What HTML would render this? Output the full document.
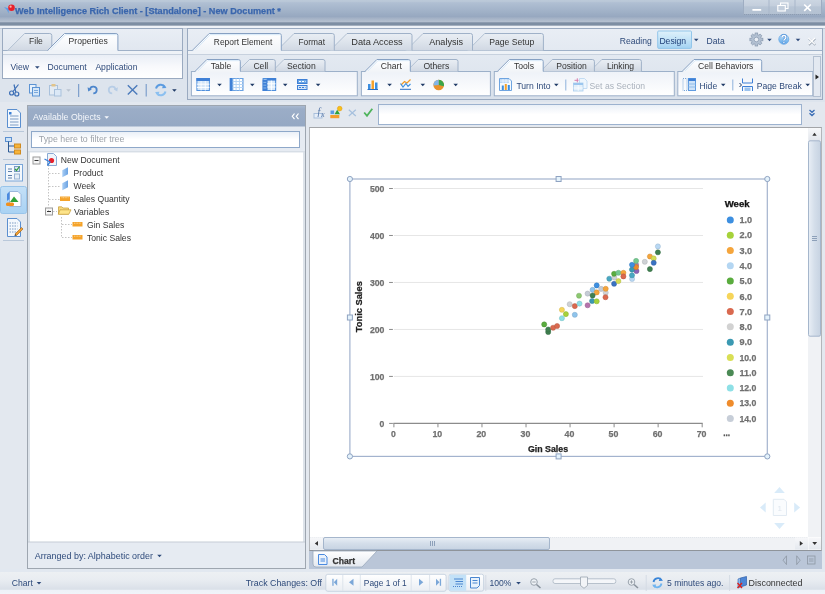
<!DOCTYPE html>
<html><head><meta charset="utf-8"><title>Web Intelligence Rich Client</title>
<style>
*{margin:0;padding:0;box-sizing:border-box}
html,body{width:825px;height:594px;overflow:hidden;background:#dde4ed;font-family:"Liberation Sans",sans-serif}
</style></head><body>
<svg width="825" height="594" viewBox="0 0 825 594" style="position:absolute;left:0;top:0;will-change:transform" font-family='"Liberation Sans", sans-serif'><defs>
<linearGradient id="gTitle" x1="0" y1="0" x2="0" y2="1">
 <stop offset="0" stop-color="#bccad9"/><stop offset="0.09" stop-color="#b8c6d7"/><stop offset="0.12" stop-color="#b0bfd3"/><stop offset="0.5" stop-color="#a1b2c8"/><stop offset="0.75" stop-color="#97a8c0"/><stop offset="0.86" stop-color="#a7b5c8"/><stop offset="1" stop-color="#b5c1d0"/>
</linearGradient>
<linearGradient id="gSel" x1="0" y1="0" x2="0" y2="1"><stop offset="0" stop-color="#ffffff"/><stop offset="1" stop-color="#f1f4f8"/></linearGradient>
<linearGradient id="gTab" x1="0" y1="0" x2="0" y2="1"><stop offset="0" stop-color="#e9eef4"/><stop offset="0.45" stop-color="#dfe5ed"/><stop offset="1" stop-color="#d0d8e3"/></linearGradient>
<linearGradient id="gStrip" x1="0" y1="0" x2="0" y2="1"><stop offset="0" stop-color="#e9eef5"/><stop offset="1" stop-color="#d6dee9"/></linearGradient>
<linearGradient id="gWhite" x1="0" y1="0" x2="0" y2="1"><stop offset="0" stop-color="#e9eef6"/><stop offset="0.5" stop-color="#f8f9fc"/><stop offset="1" stop-color="#ffffff"/></linearGradient>
<linearGradient id="gBox" x1="0" y1="0" x2="0" y2="1"><stop offset="0" stop-color="#eef2f8"/><stop offset="1" stop-color="#ffffff"/></linearGradient>
<linearGradient id="gSub" x1="0" y1="0" x2="0" y2="1"><stop offset="0" stop-color="#e4eaf2"/><stop offset="1" stop-color="#d9e1eb"/></linearGradient>
<linearGradient id="gHi" x1="0" y1="0" x2="0" y2="1"><stop offset="0" stop-color="#c4e0f7"/><stop offset="1" stop-color="#a9d2f3"/></linearGradient>
<linearGradient id="gHead" x1="0" y1="0" x2="0" y2="1"><stop offset="0" stop-color="#a9b9d0"/><stop offset="0.15" stop-color="#9badc7"/><stop offset="1" stop-color="#95a8c3"/></linearGradient>
<linearGradient id="gInput" x1="0" y1="0" x2="0" y2="1"><stop offset="0" stop-color="#e9eff7"/><stop offset="0.5" stop-color="#ffffff"/><stop offset="1" stop-color="#ffffff"/></linearGradient>
<linearGradient id="gSbBtn" x1="0" y1="0" x2="0" y2="1"><stop offset="0" stop-color="#f7f8fa"/><stop offset="1" stop-color="#e2e6ec"/></linearGradient>
<linearGradient id="gSbBtnH" x1="0" y1="0" x2="0" y2="1"><stop offset="0" stop-color="#f7f8fa"/><stop offset="1" stop-color="#e4e8ee"/></linearGradient>
<linearGradient id="gThumbV" x1="0" y1="0" x2="1" y2="0"><stop offset="0" stop-color="#e9eff6"/><stop offset="0.5" stop-color="#d4deea"/><stop offset="1" stop-color="#c7d3e2"/></linearGradient>
<linearGradient id="gThumbH" x1="0" y1="0" x2="0" y2="1"><stop offset="0" stop-color="#e9eff6"/><stop offset="0.5" stop-color="#d4deea"/><stop offset="1" stop-color="#c7d3e2"/></linearGradient>
<linearGradient id="gChartTab" x1="0" y1="0" x2="0" y2="1"><stop offset="0" stop-color="#ffffff"/><stop offset="1" stop-color="#e3e8ef"/></linearGradient>
<linearGradient id="gStatus" x1="0" y1="0" x2="0" y2="1"><stop offset="0" stop-color="#e2e8f0"/><stop offset="0.1" stop-color="#e2e8f0"/><stop offset="0.13" stop-color="#edf0f3"/><stop offset="0.45" stop-color="#e8ecf1"/><stop offset="0.78" stop-color="#dbe1e9"/><stop offset="0.84" stop-color="#e0e6ed"/><stop offset="0.86" stop-color="#eef2f8"/><stop offset="1" stop-color="#f0f4f9"/></linearGradient>
<linearGradient id="gNav" x1="0" y1="0" x2="0" y2="1"><stop offset="0" stop-color="#ffffff"/><stop offset="1" stop-color="#eaeef3"/></linearGradient>
<linearGradient id="gWin" x1="0" y1="0" x2="0" y2="1"><stop offset="0" stop-color="#cdd7e3"/><stop offset="0.45" stop-color="#c3cedc"/><stop offset="0.5" stop-color="#b8c5d5"/><stop offset="1" stop-color="#b3c1d2"/></linearGradient>
<linearGradient id="gHelp" x1="0" y1="0" x2="0" y2="1"><stop offset="0" stop-color="#d6ebfb"/><stop offset="0.5" stop-color="#8cc4f2"/><stop offset="1" stop-color="#5aa2e6"/></linearGradient>
<linearGradient id="gDesign" x1="0" y1="0" x2="0" y2="1"><stop offset="0" stop-color="#dff1fb"/><stop offset="0.5" stop-color="#c3e3f7"/><stop offset="1" stop-color="#a3d2f2"/></linearGradient>
<linearGradient id="gDim" x1="0" y1="0" x2="1" y2="0"><stop offset="0" stop-color="#a8cdf4"/><stop offset="1" stop-color="#6aa2e2"/></linearGradient>
</defs>
<rect x="0" y="0" width="825" height="22" fill="url(#gTitle)" />
<rect x="0" y="22" width="825" height="1" fill="#8d9cb0" />
<rect x="0" y="23" width="825" height="2" fill="#7d8ea3" />
<rect x="0" y="25" width="825" height="1" fill="#a3afbe" />
<rect x="0" y="26" width="825" height="78" fill="#dde4ed" />
<rect x="0" y="26" width="825" height="2" fill="#eef2f7" />
<rect x="0" y="28" width="825" height="1" fill="#c0cad8" />
<text x="15.1" y="14" font-size="9.2" fill="#3a66ad" font-weight="bold" text-anchor="start" stroke="#3a66ad" stroke-width="0.25" textLength="265.8" lengthAdjust="spacingAndGlyphs" >Web Intelligence Rich Client - [Standalone] - New Document *</text>
<path d="M4,7 L9,8.5 L8.5,13.5 L7,10 Z" fill="#5b9be8"/><circle cx="11.5" cy="7.8" r="3.3" fill="#e8202a"/><circle cx="10.6" cy="6.7" r="1.1" fill="#ffd6c8" opacity=".8"/>
<rect x="743.5" y="-1" width="78" height="15.5" fill="url(#gWin)" stroke="#9eadc2" stroke-width="1"/>
<line x1="769" y1="0" x2="769" y2="14" stroke="#a9b7ca" stroke-width="1" />
<line x1="795" y1="0" x2="795" y2="14" stroke="#a9b7ca" stroke-width="1" />
<line x1="744" y1="14.5" x2="821" y2="14.5" stroke="#8c9cb2" stroke-width="1" stroke-dasharray="1,1"/>
<rect x="752.4" y="9" width="8.8" height="1.8" fill="#ffffff" />
<rect x="780.5" y="3" width="7.5" height="5.5" fill="none" stroke="#fff" stroke-width="1.1"/><rect x="777.8" y="5.5" width="7.5" height="5.5" fill="#c3cedc" stroke="#fff" stroke-width="1.1"/>
<path d="M804.2,4.5 L810.8,10.8 M810.8,4.5 L804.2,10.8" stroke="#fff" stroke-width="1.6"/>
<rect x="2.5" y="28.5" width="180" height="50" fill="url(#gStrip)" stroke="#9aaac0" stroke-width="1" />
<rect x="3" y="50.5" width="179" height="4" fill="#eef2f7" />
<line x1="3" y1="54.5" x2="182" y2="54.5" stroke="#c7d1de" stroke-width="1" />
<rect x="3" y="55" width="179" height="23" fill="url(#gWhite)" />
<line x1="3" y1="50.5" x2="182" y2="50.5" stroke="#9fb1c8" stroke-width="1" />
<path d="M7.600000000000001,50.5 L24.6,33.5 L49.8,33.5 Q51.8,33.5 51.8,35.5 L51.8,50.5 Z" fill="url(#gTab)" stroke="none"/>
<path d="M7.600000000000001,50.5 L24.6,33.5" fill="none" stroke="#b4c2d3" stroke-width="1"/>
<path d="M24.6,33.5 L49.8,33.5 Q51.8,33.5 51.8,35.5 L51.8,50.5" fill="none" stroke="#9fb1c8" stroke-width="1"/>
<text x="29" y="44.4" font-size="8.6" fill="#333" font-weight="normal" text-anchor="start" >File</text>
<path d="M47.5,50.5 L64.5,33.5 L115.9,33.5 Q117.9,33.5 117.9,35.5 L117.9,50.5 Z" fill="url(#gSel)" stroke="none"/>
<path d="M47.5,50.5 L64.5,33.5 L115.9,33.5 Q117.9,33.5 117.9,35.5 L117.9,50.5" fill="none" stroke="#86a0c2" stroke-width="1"/>
<path d="M50.0,50.5 L65.5,34.7 L116.9,34.7" fill="none" stroke="#d6e8f8" stroke-width="1"/>
<rect x="48.7" y="49.9" width="68.7" height="1.6" fill="#eef2f7"/>
<text x="68.6" y="44.4" font-size="8.6" fill="#333" font-weight="normal" text-anchor="start" >Properties</text>
<text x="10.4" y="70" font-size="8.6" fill="#2e4a7a" font-weight="normal" text-anchor="start" >View</text>
<text x="47.6" y="70" font-size="8.6" fill="#2e4a7a" font-weight="normal" text-anchor="start" >Document</text>
<text x="95.4" y="70" font-size="8.6" fill="#2e4a7a" font-weight="normal" text-anchor="start" >Application</text>
<rect x="187.5" y="28.5" width="635" height="71" fill="url(#gStrip)" stroke="#9aaac0" stroke-width="1" />
<rect x="188" y="50.5" width="634" height="48.5" fill="url(#gSub)" />
<line x1="188" y1="50.5" x2="822" y2="50.5" stroke="#9fb1c8" stroke-width="1" />
<rect x="188" y="51" width="634" height="3" fill="#eef2f7" />
<line x1="188" y1="54.5" x2="822" y2="54.5" stroke="#c7d1de" stroke-width="1" />
<path d="M467.7,50.5 L484.7,33.5 L541.4,33.5 Q543.4,33.5 543.4,35.5 L543.4,50.5 Z" fill="url(#gTab)" stroke="none"/>
<path d="M467.7,50.5 L484.7,33.5" fill="none" stroke="#b4c2d3" stroke-width="1"/>
<path d="M484.7,33.5 L541.4,33.5 Q543.4,33.5 543.4,35.5 L543.4,50.5" fill="none" stroke="#9fb1c8" stroke-width="1"/>
<text x="489.3" y="44.7" font-size="8.6" fill="#333" font-weight="normal" text-anchor="start" >Page Setup</text>
<path d="M406.0,50.5 L423,33.5 L470.5,33.5 Q472.5,33.5 472.5,35.5 L472.5,50.5 Z" fill="url(#gTab)" stroke="none"/>
<path d="M406.0,50.5 L423,33.5" fill="none" stroke="#b4c2d3" stroke-width="1"/>
<path d="M423,33.5 L470.5,33.5 Q472.5,33.5 472.5,35.5 L472.5,50.5" fill="none" stroke="#9fb1c8" stroke-width="1"/>
<text x="429.2" y="44.7" font-size="8.6" fill="#333" font-weight="normal" text-anchor="start" textLength="33.9" lengthAdjust="spacingAndGlyphs" >Analysis</text>
<path d="M330.0,50.5 L347,33.5 L410,33.5 Q412,33.5 412,35.5 L412,50.5 Z" fill="url(#gTab)" stroke="none"/>
<path d="M330.0,50.5 L347,33.5" fill="none" stroke="#b4c2d3" stroke-width="1"/>
<path d="M347,33.5 L410,33.5 Q412,33.5 412,35.5 L412,50.5" fill="none" stroke="#9fb1c8" stroke-width="1"/>
<text x="351.3" y="44.7" font-size="8.6" fill="#333" font-weight="normal" text-anchor="start" textLength="51.4" lengthAdjust="spacingAndGlyphs" >Data Access</text>
<path d="M277.0,50.5 L294,33.5 L332.3,33.5 Q334.3,33.5 334.3,35.5 L334.3,50.5 Z" fill="url(#gTab)" stroke="none"/>
<path d="M277.0,50.5 L294,33.5" fill="none" stroke="#b4c2d3" stroke-width="1"/>
<path d="M294,33.5 L332.3,33.5 Q334.3,33.5 334.3,35.5 L334.3,50.5" fill="none" stroke="#9fb1c8" stroke-width="1"/>
<text x="298.5" y="44.7" font-size="8.6" fill="#333" font-weight="normal" text-anchor="start" textLength="26.5" lengthAdjust="spacingAndGlyphs" >Format</text>
<path d="M192.2,50.5 L209.2,33.5 L279.3,33.5 Q281.3,33.5 281.3,35.5 L281.3,50.5 Z" fill="url(#gSel)" stroke="none"/>
<path d="M192.2,50.5 L209.2,33.5 L279.3,33.5 Q281.3,33.5 281.3,35.5 L281.3,50.5" fill="none" stroke="#86a0c2" stroke-width="1"/>
<path d="M194.7,50.5 L210.2,34.7 L280.3,34.7" fill="none" stroke="#d6e8f8" stroke-width="1"/>
<rect x="193.39999999999998" y="49.9" width="87.40000000000002" height="1.6" fill="#eef2f7"/>
<text x="213.8" y="44.7" font-size="8.6" fill="#333" font-weight="normal" text-anchor="start" textLength="58.5" lengthAdjust="spacingAndGlyphs" >Report Element</text>
<rect x="191.4" y="71.5" width="165.9" height="24.3" fill="url(#gBox)" stroke="#9cb0c9" stroke-width="1" />
<path d="M272.0,71.5 L284,59.5 L323,59.5 Q325,59.5 325,61.5 L325,71.5 Z" fill="url(#gTab)" stroke="none"/>
<path d="M272.0,71.5 L284,59.5" fill="none" stroke="#b4c2d3" stroke-width="1"/>
<path d="M284,59.5 L323,59.5 Q325,59.5 325,61.5 L325,71.5" fill="none" stroke="#9fb1c8" stroke-width="1"/>
<text x="287" y="69.2" font-size="8.6" fill="#333" font-weight="normal" text-anchor="start" >Section</text>
<path d="M237.5,71.5 L249.5,59.5 L273.3,59.5 Q275.3,59.5 275.3,61.5 L275.3,71.5 Z" fill="url(#gTab)" stroke="none"/>
<path d="M237.5,71.5 L249.5,59.5" fill="none" stroke="#b4c2d3" stroke-width="1"/>
<path d="M249.5,59.5 L273.3,59.5 Q275.3,59.5 275.3,61.5 L275.3,71.5" fill="none" stroke="#9fb1c8" stroke-width="1"/>
<text x="253.4" y="69.2" font-size="8.6" fill="#333" font-weight="normal" text-anchor="start" >Cell</text>
<path d="M194.9,71.5 L206.9,59.5 L238.3,59.5 Q240.3,59.5 240.3,61.5 L240.3,71.5 Z" fill="url(#gSel)" stroke="none"/>
<path d="M194.9,71.5 L206.9,59.5 L238.3,59.5 Q240.3,59.5 240.3,61.5 L240.3,71.5" fill="none" stroke="#86a0c2" stroke-width="1"/>
<path d="M197.4,71.5 L207.9,60.7 L239.3,60.7" fill="none" stroke="#d6e8f8" stroke-width="1"/>
<rect x="196.1" y="70.9" width="43.7" height="1.6" fill="#f1f4f8"/>
<text x="210.8" y="69.2" font-size="8.6" fill="#333" font-weight="normal" text-anchor="start" >Table</text>
<rect x="361.4" y="71.5" width="129.0" height="24.3" fill="url(#gBox)" stroke="#9cb0c9" stroke-width="1" />
<path d="M406.3,71.5 L418.3,59.5 L456,59.5 Q458,59.5 458,61.5 L458,71.5 Z" fill="url(#gTab)" stroke="none"/>
<path d="M406.3,71.5 L418.3,59.5" fill="none" stroke="#b4c2d3" stroke-width="1"/>
<path d="M418.3,59.5 L456,59.5 Q458,59.5 458,61.5 L458,71.5" fill="none" stroke="#9fb1c8" stroke-width="1"/>
<text x="423.4" y="69.2" font-size="8.6" fill="#333" font-weight="normal" text-anchor="start" >Others</text>
<path d="M364.9,71.5 L376.9,59.5 L408.3,59.5 Q410.3,59.5 410.3,61.5 L410.3,71.5 Z" fill="url(#gSel)" stroke="none"/>
<path d="M364.9,71.5 L376.9,59.5 L408.3,59.5 Q410.3,59.5 410.3,61.5 L410.3,71.5" fill="none" stroke="#86a0c2" stroke-width="1"/>
<path d="M367.4,71.5 L377.9,60.7 L409.3,60.7" fill="none" stroke="#d6e8f8" stroke-width="1"/>
<rect x="366.09999999999997" y="70.9" width="43.70000000000003" height="1.6" fill="#f1f4f8"/>
<text x="380.8" y="69.2" font-size="8.6" fill="#333" font-weight="normal" text-anchor="start" >Chart</text>
<rect x="494.3" y="71.5" width="179.99999999999994" height="24.3" fill="url(#gBox)" stroke="#9cb0c9" stroke-width="1" />
<path d="M589.8,71.5 L601.8,59.5 L639.4,59.5 Q641.4,59.5 641.4,61.5 L641.4,71.5 Z" fill="url(#gTab)" stroke="none"/>
<path d="M589.8,71.5 L601.8,59.5" fill="none" stroke="#b4c2d3" stroke-width="1"/>
<path d="M601.8,59.5 L639.4,59.5 Q641.4,59.5 641.4,61.5 L641.4,71.5" fill="none" stroke="#9fb1c8" stroke-width="1"/>
<text x="606.9" y="69.2" font-size="8.6" fill="#333" font-weight="normal" text-anchor="start" >Linking</text>
<path d="M540.3,71.5 L552.3,59.5 L592.4,59.5 Q594.4,59.5 594.4,61.5 L594.4,71.5 Z" fill="url(#gTab)" stroke="none"/>
<path d="M540.3,71.5 L552.3,59.5" fill="none" stroke="#b4c2d3" stroke-width="1"/>
<path d="M552.3,59.5 L592.4,59.5 Q594.4,59.5 594.4,61.5 L594.4,71.5" fill="none" stroke="#9fb1c8" stroke-width="1"/>
<text x="556.2" y="69.2" font-size="8.6" fill="#333" font-weight="normal" text-anchor="start" >Position</text>
<path d="M497.3,71.5 L509.3,59.5 L541.2,59.5 Q543.2,59.5 543.2,61.5 L543.2,71.5 Z" fill="url(#gSel)" stroke="none"/>
<path d="M497.3,71.5 L509.3,59.5 L541.2,59.5 Q543.2,59.5 543.2,61.5 L543.2,71.5" fill="none" stroke="#86a0c2" stroke-width="1"/>
<path d="M499.8,71.5 L510.3,60.7 L542.2,60.7" fill="none" stroke="#d6e8f8" stroke-width="1"/>
<rect x="498.5" y="70.9" width="44.20000000000003" height="1.6" fill="#f1f4f8"/>
<text x="514" y="69.2" font-size="8.6" fill="#333" font-weight="normal" text-anchor="start" >Tools</text>
<rect x="677.8" y="71.5" width="135.0" height="24.3" fill="url(#gBox)" stroke="#9cb0c9" stroke-width="1" />
<path d="M682.0,71.5 L694,59.5 L759.7,59.5 Q761.7,59.5 761.7,61.5 L761.7,71.5 Z" fill="url(#gSel)" stroke="none"/>
<path d="M682.0,71.5 L694,59.5 L759.7,59.5 Q761.7,59.5 761.7,61.5 L761.7,71.5" fill="none" stroke="#86a0c2" stroke-width="1"/>
<path d="M684.5,71.5 L695,60.7 L760.7,60.7" fill="none" stroke="#d6e8f8" stroke-width="1"/>
<rect x="683.2" y="70.9" width="78.00000000000004" height="1.6" fill="#f1f4f8"/>
<text x="698" y="69.2" font-size="8.6" fill="#333" font-weight="normal" text-anchor="start" >Cell Behaviors</text>
<rect x="813.5" y="56.5" width="7" height="40" fill="#e3e9f1" stroke="#b3c0d1" stroke-width="1" />
<path d="M815.5,74.5 L819,77 L815.5,79.5 Z" fill="#222"/>
<text x="619.8" y="43.6" font-size="8.6" fill="#2e4a7a" font-weight="normal" text-anchor="start" >Reading</text>
<rect x="657.7" y="31" width="33.8" height="17.4" fill="url(#gDesign)" stroke="#93c6ea" stroke-width="1" rx="1"/>
<text x="659.4" y="43.6" font-size="8.6" fill="#1f3f78" font-weight="normal" text-anchor="start" >Design</text>
<text x="706.6" y="43.6" font-size="8.6" fill="#2e4a7a" font-weight="normal" text-anchor="start" >Data</text>
<rect x="196.9" y="78.5" width="12.5" height="12" fill="#d4e6f8" stroke="#4f8fdc" stroke-width="1"/>
<rect x="196.4" y="78" width="13.5" height="3" fill="#3f80d6" />
<line x1="201.1" y1="81" x2="201.1" y2="90.5" stroke="#f4f9fe" stroke-width="1" />
<line x1="205.3" y1="81" x2="205.3" y2="90.5" stroke="#f4f9fe" stroke-width="1" />
<line x1="196.9" y1="84.2" x2="209.4" y2="84.2" stroke="#ffffff" stroke-width="1" />
<line x1="196.9" y1="87.4" x2="209.4" y2="87.4" stroke="#ffffff" stroke-width="1" />
<path d="M217.2,83.8 L221.8,83.8 L219.5,86.3 Z" fill="#1f3a66"/>
<rect x="230.3" y="78.5" width="12.5" height="12" fill="#d4e6f8" stroke="#4f8fdc" stroke-width="1"/>
<rect x="229.8" y="78" width="3" height="13" fill="#3f80d6" />
<rect x="232.8" y="78.5" width="10" height="12" fill="#ffffff" stroke="#6aa2e2"/>
<line x1="236.10000000000002" y1="78.5" x2="236.10000000000002" y2="90.5" stroke="#b5d4f4" stroke-width="1" />
<line x1="239.4" y1="78.5" x2="239.4" y2="90.5" stroke="#b5d4f4" stroke-width="1" />
<line x1="232.8" y1="81.5" x2="242.8" y2="81.5" stroke="#b5d4f4" stroke-width="1" />
<line x1="232.8" y1="84.5" x2="242.8" y2="84.5" stroke="#b5d4f4" stroke-width="1" />
<line x1="232.8" y1="87.5" x2="242.8" y2="87.5" stroke="#b5d4f4" stroke-width="1" />
<path d="M250.0,83.8 L254.60000000000002,83.8 L252.3,86.3 Z" fill="#1f3a66"/>
<rect x="263.1" y="78.5" width="12.5" height="12" fill="#d4e6f8" stroke="#4f8fdc" stroke-width="1"/>
<rect x="267.1" y="78.5" width="8.5" height="12" fill="#d8e9fa" stroke="#4f8fdc"/>
<rect x="267.1" y="78" width="9" height="2.6" fill="#3f80d6" />
<line x1="267.1" y1="83.8" x2="275.6" y2="83.8" stroke="#ffffff" stroke-width="1" />
<line x1="267.1" y1="87.0" x2="275.6" y2="87.0" stroke="#ffffff" stroke-width="1" />
<line x1="271.35" y1="80.6" x2="271.35" y2="90.5" stroke="#ffffff" stroke-width="1" />
<rect x="262.6" y="79.6" width="4.5" height="11.4" fill="#3f80d6" />
<line x1="263.40000000000003" y1="82.39999999999999" x2="266.3" y2="82.39999999999999" stroke="#9cc6f0" stroke-width="0.8" />
<line x1="263.40000000000003" y1="85.19999999999999" x2="266.3" y2="85.19999999999999" stroke="#9cc6f0" stroke-width="0.8" />
<line x1="263.40000000000003" y1="88.0" x2="266.3" y2="88.0" stroke="#9cc6f0" stroke-width="0.8" />
<path d="M282.9,83.8 L287.5,83.8 L285.2,86.3 Z" fill="#1f3a66"/>
<rect x="297.5" y="79.5" width="9.5" height="4" fill="#6aa6e6" stroke="#3f80d6"/><rect x="297.5" y="85.5" width="9.5" height="4" fill="#d4e6f8" stroke="#3f80d6"/>
<line x1="299" y1="81.5" x2="305.5" y2="81.5" stroke="#ffffff" stroke-width="1" stroke-dasharray="2,1"/>
<line x1="299" y1="87.5" x2="305.5" y2="87.5" stroke="#3f80d6" stroke-width="1" stroke-dasharray="2,1"/>
<path d="M315.8,83.8 L320.40000000000003,83.8 L318.1,86.3 Z" fill="#1f3a66"/>
<rect x="368" y="84" width="2.5" height="5.5" fill="#3b8ee0"/><rect x="371.5" y="80.5" width="2.5" height="9" fill="#f5a22b"/><rect x="375" y="82.5" width="2.5" height="7" fill="#3b8ee0"/><line x1="367.5" y1="89.5" x2="378" y2="89.5" stroke="#2b6fc4"/>
<path d="M387.3,83.8 L391.90000000000003,83.8 L389.6,86.3 Z" fill="#1f3a66"/>
<path d="M401,85 L404.5,81.5 L407,83 L410.5,79.5" fill="none" stroke="#f29b27" stroke-width="1.2"/><path d="M400.5,83.5 L403,87 L406,83.5 L408,86.5 L410.5,84" fill="none" stroke="#3b8ee0" stroke-width="1.1"/><line x1="400" y1="89.3" x2="411" y2="89.3" stroke="#2b6fc4"/>
<path d="M420.5,83.8 L425.1,83.8 L422.8,86.3 Z" fill="#1f3a66"/>
<circle cx="438.7" cy="85" r="5.3" fill="#e8912c"/><path d="M438.7,85 L438.7,79.7 A5.3,5.3 0 0 1 443.9,86.2 Z" fill="#3aa64a"/><path d="M438.7,85 L433.5,85.6 A5.3,5.3 0 0 1 438.7,79.7 Z" fill="#7fb6ea"/>
<path d="M453.4,83.8 L458.0,83.8 L455.7,86.3 Z" fill="#1f3a66"/>
<path d="M499.5,78.5 L509,78.5 L511.5,81 L511.5,90.5 L499.5,90.5 Z" fill="#f4f9fe" stroke="#6ea4e0"/><rect x="500" y="79" width="9" height="4" fill="#bcd8f5"/><line x1="500" y1="81" x2="509" y2="81" stroke="#ffffff" stroke-width=".6"/><line x1="503" y1="79" x2="503" y2="83" stroke="#ffffff" stroke-width=".6"/><line x1="506" y1="79" x2="506" y2="83" stroke="#ffffff" stroke-width=".6"/><rect x="501.8" y="85.5" width="2" height="4.5" fill="#3b8ee0"/><rect x="504.8" y="84" width="2" height="6" fill="#f5a22b"/><rect x="507.8" y="85" width="2" height="5" fill="#3b8ee0"/>
<text x="516.4" y="88.5" font-size="8.6" fill="#2e4a7a" font-weight="normal" text-anchor="start" >Turn Into</text>
<path d="M554.0,83.8 L558.5999999999999,83.8 L556.3,86.3 Z" fill="#1f3a66"/>
<line x1="565.8" y1="79.5" x2="565.8" y2="90.5" stroke="#8fb3dc" stroke-width="1" />
<path d="M579.5,78.5 L584.5,78.5 L587,81 L587,88.5 L579.5,88.5 Z" fill="#eef6fd" stroke="#b9d6f0" stroke-width=".8"/><rect x="573.5" y="83" width="9.5" height="8" fill="#e3f0fb" stroke="#a9cdee" stroke-width=".8"/><rect x="573.5" y="83" width="9.5" height="2" fill="#9cc6ee"/><line x1="578.2" y1="85" x2="578.2" y2="91" stroke="#ffffff" stroke-width=".7"/><line x1="573.5" y1="88" x2="583" y2="88" stroke="#ffffff" stroke-width=".7"/><path d="M574.5,80.3 L578.5,80.3 M577.3,78.3 L577.3,82.3" stroke="#d680b0" stroke-width="1"/>
<text x="589.6" y="88.5" font-size="8.6" fill="#a9b1bc" font-weight="normal" text-anchor="start" >Set as Section</text>
<rect x="683" y="78.5" width="4" height="12" fill="none" stroke="#7aa6d8" stroke-dasharray="1,1"/><rect x="688.5" y="78.5" width="7" height="12" fill="#cfe3f8" stroke="#5f9be0"/><rect x="688.5" y="78.5" width="7" height="2.5" fill="#3f80d6"/><line x1="688.5" y1="84" x2="695.5" y2="84" stroke="#8fbcea"/><line x1="688.5" y1="87" x2="695.5" y2="87" stroke="#8fbcea"/>
<text x="699.5" y="88.5" font-size="8.6" fill="#2e4a7a" font-weight="normal" text-anchor="start" >Hide</text>
<path d="M720.9000000000001,83.8 L725.5,83.8 L723.2,86.3 Z" fill="#1f3a66"/>
<line x1="732.8" y1="79.5" x2="732.8" y2="90.5" stroke="#8fb3dc" stroke-width="1" />
<path d="M742.5,78.5 L742.5,83 L752.5,83 L752.5,78.5" fill="none" stroke="#3f80d6"/><path d="M742.5,91 L742.5,86.5 L752.5,86.5 L752.5,91" fill="none" stroke="#3f80d6"/><rect x="744.5" y="87.5" width="6" height="3.5" fill="#9cc3ee"/><path d="M739.5,83 L741.5,85 L739.5,87" fill="none" stroke="#1f3a66"/>
<text x="756.8" y="88.5" font-size="8.6" fill="#2e4a7a" font-weight="normal" text-anchor="start" >Page Break</text>
<path d="M805.4000000000001,83.8 L810.0,83.8 L807.7,86.3 Z" fill="#1f3a66"/>
<g transform="translate(756.4,39.5)" fill="#b3c1d2" stroke="#8797ad" stroke-width=".7"><rect x="-1.3" y="-6.5" width="2.6" height="3" transform="rotate(0)"/><rect x="-1.3" y="-6.5" width="2.6" height="3" transform="rotate(45)"/><rect x="-1.3" y="-6.5" width="2.6" height="3" transform="rotate(90)"/><rect x="-1.3" y="-6.5" width="2.6" height="3" transform="rotate(135)"/><rect x="-1.3" y="-6.5" width="2.6" height="3" transform="rotate(180)"/><rect x="-1.3" y="-6.5" width="2.6" height="3" transform="rotate(225)"/><rect x="-1.3" y="-6.5" width="2.6" height="3" transform="rotate(270)"/><rect x="-1.3" y="-6.5" width="2.6" height="3" transform="rotate(315)"/><circle r="4.9"/><circle r="2.3" fill="#e9eef4"/></g>
<g transform="translate(756.4,39.5)" fill="#b3c1d2"><rect x="-.9" y="-5.6" width="1.8" height="2" transform="rotate(0)"/><rect x="-.9" y="-5.6" width="1.8" height="2" transform="rotate(45)"/><rect x="-.9" y="-5.6" width="1.8" height="2" transform="rotate(90)"/><rect x="-.9" y="-5.6" width="1.8" height="2" transform="rotate(135)"/><rect x="-.9" y="-5.6" width="1.8" height="2" transform="rotate(180)"/><rect x="-.9" y="-5.6" width="1.8" height="2" transform="rotate(225)"/><rect x="-.9" y="-5.6" width="1.8" height="2" transform="rotate(270)"/><rect x="-.9" y="-5.6" width="1.8" height="2" transform="rotate(315)"/></g>
<path d="M767.2,38.8 L771.8,38.8 L769.5,41.3 Z" fill="#2e4a7a"/>
<circle cx="783.8" cy="39.3" r="5" fill="url(#gHelp)" stroke="#6aa8e4" stroke-width=".8"/><path d="M781.9,37.7 Q781.9,35.5 783.9,35.5 Q785.9,35.5 785.9,37.4 Q785.9,38.6 784.5,39.3 Q783.9,39.7 783.9,40.8" fill="none" stroke="#3a7fd0" stroke-width="2.3"/><path d="M781.9,37.7 Q781.9,35.5 783.9,35.5 Q785.9,35.5 785.9,37.4 Q785.9,38.6 784.5,39.3 Q783.9,39.7 783.9,40.8" fill="none" stroke="#ffffff" stroke-width="1.3"/><circle cx="783.9" cy="42.6" r="1" fill="#ffffff" stroke="#3a7fd0" stroke-width=".5"/>
<path d="M795.7,38.8 L800.3,38.8 L798,41.3 Z" fill="#2e4a7a"/>
<path d="M808.8,38.6 L815.3,45 M815.3,38.6 L808.8,45" stroke="#a0abb9" stroke-width="1.9"/><path d="M808.5,38 L815,44.4 M815,38 L808.5,44.4" stroke="#ffffff" stroke-width="1.3"/>
<path d="M693.9000000000001,38.8 L698.5,38.8 L696.2,41.3 Z" fill="#2e4a7a"/>
<text x="10.4" y="70" font-size="8.6" fill="#2e4a7a" font-weight="normal" text-anchor="start" ></text>
<path d="M35.0,66.3 L39.599999999999994,66.3 L37.3,68.8 Z" fill="#2e4a7a"/>
<g fill="none" stroke="#3a6db5" stroke-width="1.2"><circle cx="11.6" cy="93" r="2"/><circle cx="16.8" cy="94" r="2"/><path d="M13,91.5 L18.5,84.5 M15.8,92.2 L14,84.5"/></g>
<rect x="29.5" y="84.5" width="6.5" height="8.5" fill="#e7f1fb" stroke="#5c93d3"/><rect x="32.5" y="87.5" width="7" height="8.5" fill="#d6e7f8" stroke="#5c93d3"/><line x1="34" y1="90.5" x2="38" y2="90.5" stroke="#7aa8dc"/><line x1="34" y1="92.5" x2="38" y2="92.5" stroke="#7aa8dc"/>
<rect x="49.5" y="85.5" width="8" height="9.5" fill="#e3ebf4" stroke="#a9c1dc"/><rect x="51.5" y="84" width="4" height="2.5" fill="#e2c48a"/><rect x="54.5" y="89.5" width="6.5" height="6.5" fill="#dbe8f6" stroke="#a9c1dc"/>
<path d="M66.2,89.3 L70.8,89.3 L68.5,91.8 Z" fill="#b9c3cf"/>
<line x1="78.7" y1="84" x2="78.7" y2="97" stroke="#6a92c6" stroke-width="1" />
<path d="M90,89.3 A3.4,3.4 0 1 1 93.3,93.4" fill="none" stroke="#4d86cc" stroke-width="1.8"/><path d="M87.6,87.2 L91.8,89.6 L88.2,91.6 Z" fill="#4d86cc"/>
<path d="M115.5,89.3 A3.4,3.4 0 1 0 112.2,93.4" fill="none" stroke="#b7cde6" stroke-width="1.8"/><path d="M117.9,87.2 L113.7,89.6 L117.3,91.6 Z" fill="#b7cde6"/>
<path d="M127.8,85.3 L137.3,94.6 M137.3,85.3 L127.8,94.6" stroke="#4c7bbb" stroke-width="1.4"/>
<line x1="146.2" y1="84" x2="146.2" y2="96.5" stroke="#6a92c6" stroke-width="1" />
<path d="M156,88.5 A5,5 0 0 1 165,87" fill="none" stroke="#5b9be0" stroke-width="2"/><path d="M165.5,91.5 A5,5 0 0 1 156.5,93" fill="none" stroke="#8cc0f0" stroke-width="2"/><path d="M163.5,84.5 L166.5,88 L162,88.3Z" fill="#5b9be0"/><path d="M158,95.5 L155,92 L159.5,91.7Z" fill="#8cc0f0"/>
<path d="M172.1,89.3 L176.70000000000002,89.3 L174.4,91.8 Z" fill="#1f3a66"/>
<rect x="0" y="102" width="825" height="467" fill="#e3e8ef" />
<rect x="0.5" y="186.5" width="26" height="27" fill="url(#gHi)" stroke="#98c4ea" stroke-width="1" rx="2"/>
<line x1="3" y1="131.5" x2="24" y2="131.5" stroke="#b9c8da" stroke-width="1" />
<line x1="3" y1="159.5" x2="24" y2="159.5" stroke="#b9c8da" stroke-width="1" />
<line x1="3" y1="240.5" x2="24" y2="240.5" stroke="#b9c8da" stroke-width="1" />
<path d="M7.5,109.5 L17,109.5 L20.5,113 L20.5,127.5 L7.5,127.5 Z" fill="#f4f8fd" stroke="#5b8fcf"/>
<rect x="9" y="112" width="2.5" height="2.5" fill="#3a7fd6"/>
<line x1="10" y1="116" x2="18.5" y2="116" stroke="#7c9cc4" stroke-width="1" />
<line x1="10" y1="119" x2="18.5" y2="119" stroke="#7c9cc4" stroke-width="1" />
<line x1="10" y1="122" x2="18.5" y2="122" stroke="#7c9cc4" stroke-width="1" />
<line x1="10" y1="125" x2="18.5" y2="125" stroke="#7c9cc4" stroke-width="1" />
<rect x="5.5" y="137.5" width="6" height="4" fill="#cde3f8" stroke="#5b8fcf"/><path d="M8.5,141.5 L8.5,152 L14,152 M8.5,146 L14,146" fill="none" stroke="#2d5b95"/><rect x="14.5" y="144" width="6" height="4" fill="#f6b43a" stroke="#d08a20"/><rect x="14.5" y="150" width="6" height="4" fill="#f6b43a" stroke="#d08a20"/>
<rect x="5.5" y="164.5" width="17" height="16.5" fill="#f4f8fd" stroke="#7aa6d8"/><line x1="8" y1="169" x2="12" y2="169" stroke="#5d7ea8"/><line x1="8" y1="171.5" x2="12" y2="171.5" stroke="#5d7ea8"/><line x1="8" y1="175.5" x2="12" y2="175.5" stroke="#5d7ea8"/><line x1="8" y1="178" x2="12" y2="178" stroke="#5d7ea8"/><rect x="14.5" y="166.5" width="5" height="5" fill="#dbe7f3" stroke="#7a9cc4"/><path d="M15,169 L16.5,170.5 L19.5,166.5" fill="none" stroke="#2f9a3a" stroke-width="1.2"/><rect x="14.5" y="174" width="5" height="5" fill="#e6eef7" stroke="#9ab4d4"/>
<path d="M9.5,191.5 L18,191.5 L21,194.5 L21,206.5 L9.5,206.5 Z" fill="#ffffff" stroke="#9bb8dc"/><path d="M7,194 L9.5,191.5 L9.5,199 L7,201 Z" fill="#4a8ae0"/><path d="M10,202 L14,196.5 L18.5,202 Z" fill="#2fa23a"/><rect x="6" y="202.5" width="8" height="3.5" rx="1.5" fill="#f0901e"/>
<path d="M7.5,218.5 L17,218.5 L20.5,222 L20.5,236.5 L7.5,236.5 Z" fill="#f4f8fd" stroke="#5b8fcf"/>
<line x1="9.5" y1="223" x2="17.5" y2="223" stroke="#7c9cc4" stroke-width="1" stroke-dasharray="1.5,1"/>
<line x1="9.5" y1="226" x2="17.5" y2="226" stroke="#7c9cc4" stroke-width="1" stroke-dasharray="1.5,1"/>
<line x1="9.5" y1="229" x2="17.5" y2="229" stroke="#7c9cc4" stroke-width="1" stroke-dasharray="1.5,1"/>
<line x1="9.5" y1="232" x2="17.5" y2="232" stroke="#7c9cc4" stroke-width="1" stroke-dasharray="1.5,1"/>
<path d="M15,234 L21.5,227.5 L23,229 L16.5,235.5 Z" fill="#f0a030" stroke="#a05a10" stroke-width=".6"/><path d="M15,234 L14.5,236 L16.5,235.5Z" fill="#333"/>
<rect x="27.5" y="105.5" width="278" height="463" fill="#e6ebf2" stroke="#9ea6b0" stroke-width="1" />
<rect x="28" y="106" width="277" height="20.5" fill="url(#gHead)" />
<text x="33" y="120" font-size="8.6" fill="#f4f7fb" font-weight="normal" text-anchor="start" textLength="67.7" lengthAdjust="spacingAndGlyphs" >Available Objects</text>
<path d="M104.4,116.3 L109.0,116.3 L106.7,118.8 Z" fill="#f4f7fb"/>
<path d="M294.5,113.5 L292.3,116.3 L294.5,119.1 M298.5,113.5 L296.3,116.3 L298.5,119.1" fill="none" stroke="#ffffff" stroke-width="1.2"/>
<rect x="31.5" y="131.5" width="268" height="16" fill="url(#gInput)" stroke="#8ea8c9" stroke-width="1" />
<text x="38.8" y="142.4" font-size="8.6" fill="#9ca2aa" font-weight="normal" text-anchor="start" textLength="85.6" lengthAdjust="spacingAndGlyphs" >Type here to filter tree</text>
<line x1="28" y1="152" x2="305" y2="152" stroke="#c9d1db" stroke-width="1" />
<rect x="28" y="152.5" width="277" height="389.5" fill="#dde3ea" />
<rect x="30" y="152.5" width="273" height="389.5" fill="#ffffff" />
<line x1="28" y1="542" x2="305" y2="542" stroke="#c5ccd5" stroke-width="1" />
<text x="34.7" y="558.6" font-size="8.6" fill="#2e4a7a" font-weight="normal" text-anchor="start" textLength="118.3" lengthAdjust="spacingAndGlyphs" >Arranged by: Alphabetic order</text>
<path d="M157.2,554.8 L161.8,554.8 L159.5,557.3 Z" fill="#2e4a7a"/>
<rect x="33.0" y="157.0" width="7" height="7" fill="#f6f6f6" stroke="#9a9a9a"/><line x1="34.5" y1="160.5" x2="38.5" y2="160.5" stroke="#333"/>
<rect x="45.5" y="208.0" width="7" height="7" fill="#f6f6f6" stroke="#9a9a9a"/><line x1="47" y1="211.5" x2="51" y2="211.5" stroke="#333"/>
<g stroke="#c4c4c4" stroke-width="1" stroke-dasharray="1.5,1.5" fill="none"><path d="M48.5,165 L48.5,211"/><path d="M49,173.5 L60,173.5"/><path d="M49,186.5 L60,186.5"/><path d="M49,199.5 L60,199.5"/><path d="M53,211.5 L57,211.5"/><path d="M61.5,217 L61.5,237.5"/><path d="M62,224.5 L72,224.5"/><path d="M62,237.5 L72,237.5"/></g>
<path d="M47.5,153.5 L53.5,153.5 L56.5,156.5 L56.5,165.5 L47.5,165.5 Z" fill="#f0f5fb" stroke="#8aaad4"/><circle cx="51.5" cy="160.5" r="2.6" fill="#e8202a"/><path d="M44.5,159 L50,162 L47.5,165.5" fill="none" stroke="#3a7fd6" stroke-width="1.3"/>
<text x="60.8" y="163.4" font-size="8.6" fill="#333" font-weight="normal" text-anchor="start" >New Document</text>
<path d="M62.3,170.2 L68,167.2 L68,174.2 L62.3,177.2 Z" fill="url(#gDim)"/>
<path d="M62.3,183.2 L68,180.2 L68,187.2 L62.3,190.2 Z" fill="url(#gDim)"/>
<text x="73.6" y="176.3" font-size="8.6" fill="#333" font-weight="normal" text-anchor="start" >Product</text>
<text x="73.6" y="189.2" font-size="8.6" fill="#333" font-weight="normal" text-anchor="start" >Week</text>
<rect x="60" y="196.5" width="10" height="4.5" fill="#f5a32a"/><path d="M61.5,197.7 L68.5,197.7" stroke="#fde0a8" stroke-width=".8" stroke-dasharray="1,.6"/>
<text x="73.6" y="202" font-size="8.6" fill="#333" font-weight="normal" text-anchor="start" >Sales Quantity</text>
<path d="M58.5,206.8 L61.8,206.8 L63,208 L68.5,208 L68.5,214 L58.5,214 Z" fill="#f5d77e" stroke="#c49a30" stroke-width=".7"/><path d="M60,209.8 L71,209.8 L68.8,214.3 L58.3,214.3 Z" fill="#fde48a" stroke="#c49a30" stroke-width=".7"/>
<text x="74" y="214.8" font-size="8.6" fill="#333" font-weight="normal" text-anchor="start" >Variables</text>
<rect x="72.5" y="222" width="10" height="4.5" fill="#f5a32a"/><path d="M74.0,223.2 L81.0,223.2" stroke="#fde0a8" stroke-width=".8" stroke-dasharray="1,.6"/>
<text x="87" y="227.6" font-size="8.6" fill="#333" font-weight="normal" text-anchor="start" >Gin Sales</text>
<rect x="72.5" y="235" width="10" height="4.5" fill="#f5a32a"/><path d="M74.0,236.2 L81.0,236.2" stroke="#fde0a8" stroke-width=".8" stroke-dasharray="1,.6"/>
<text x="87" y="240.5" font-size="8.6" fill="#333" font-weight="normal" text-anchor="start" >Tonic Sales</text>
<rect x="314" y="113.5" width="8" height="4.5" fill="#e6eef8" stroke="#a9bfdc"/>
<text x="317.5" y="115" font-family="Liberation Serif" font-style="italic" font-size="10" fill="#5677a8">f</text><text x="321.3" y="116.5" font-family="Liberation Serif" font-style="italic" font-size="7.5" fill="#5677a8">x</text>
<rect x="330.5" y="110.5" width="3.6" height="3.6" fill="#5b9be0"/><path d="M334.5,114.2 L337.2,109.8 L340,114.2 Z" fill="#2fa23a"/><circle cx="339.7" cy="108.6" r="2.3" fill="#f6c21a" stroke="#e89a10" stroke-width=".6"/><rect x="330.3" y="115" width="9" height="3.2" fill="#f29e2e"/>
<path d="M348.8,109.8 L355.8,116 M355.8,109.8 L348.8,116" stroke="#a6c0de" stroke-width="1.2"/>
<path d="M364.2,112.5 L367,115.8 L372.3,108.8" fill="none" stroke="#4fb45c" stroke-width="1.8"/>
<rect x="378.5" y="104.5" width="423" height="20" fill="url(#gInput)" stroke="#9cb2cf" stroke-width="1" />
<path d="M809.5,110 L812,112.3 L814.5,110 M809.5,113.3 L812,115.6 L814.5,113.3" fill="none" stroke="#3a6db5" stroke-width="1.3"/>
<rect x="309.5" y="127.5" width="512" height="423" fill="#ffffff" stroke="#b3b6ba" stroke-width="1" />
<line x1="309.5" y1="127.5" x2="821.5" y2="127.5" stroke="#a3a5a8" stroke-width="1" />
<rect x="808" y="128" width="13" height="409" fill="#f0f2f5" />
<rect x="808.5" y="128" width="12" height="12.5" fill="url(#gSbBtn)" />
<path d="M812.3,135.8 L814.5,132.8 L816.7,135.8 Z" fill="#333"/>
<rect x="808.5" y="140.8" width="12" height="195.4" fill="url(#gThumbV)" stroke="#a5b6cc" stroke-width="1" rx="1.5"/>
<line x1="812" y1="236.5" x2="817" y2="236.5" stroke="#8da0b9" stroke-width="1" />
<line x1="812" y1="238.5" x2="817" y2="238.5" stroke="#8da0b9" stroke-width="1" />
<line x1="812" y1="240.5" x2="817" y2="240.5" stroke="#8da0b9" stroke-width="1" />
<rect x="310" y="537" width="498" height="13" fill="#f0f2f5" />
<line x1="310" y1="537.5" x2="808" y2="537.5" stroke="#e2e6eb" stroke-width="1" stroke-dasharray="1,1"/>
<rect x="310" y="537.5" width="13" height="12" fill="url(#gSbBtnH)" />
<path d="M318,541 L314.8,543.4 L318,545.8 Z" fill="#333"/>
<rect x="323.5" y="537.5" width="226" height="12" fill="url(#gThumbH)" stroke="#a5b6cc" stroke-width="1" rx="1.5"/>
<line x1="430.5" y1="541" x2="430.5" y2="546" stroke="#8da0b9" stroke-width="1" />
<line x1="432.5" y1="541" x2="432.5" y2="546" stroke="#8da0b9" stroke-width="1" />
<line x1="434.5" y1="541" x2="434.5" y2="546" stroke="#8da0b9" stroke-width="1" />
<rect x="795" y="537.5" width="13" height="12" fill="url(#gSbBtnH)" />
<path d="M799.8,541 L803,543.4 L799.8,545.8 Z" fill="#333"/>
<rect x="808.5" y="537.5" width="12.5" height="12" fill="url(#gSbBtnH)" />
<path d="M812.3,542 L817.1,542 L814.7,545 Z" fill="#333"/>
<line x1="309.5" y1="550.5" x2="821.5" y2="550.5" stroke="#8f949a" stroke-width="1" />
<rect x="309" y="551" width="513" height="18" fill="#bac6d8" />
<path d="M313,551 L377,551 L362,567 L316,567 Q313,567 313,564 Z" fill="url(#gChartTab)" stroke="#9aa9bd" stroke-width=".8"/>
<path d="M318.5,554.5 L324.5,554.5 L327,557 L327,564.5 L318.5,564.5 Z" fill="#eaf2fb" stroke="#4a8ae0"/><line x1="320.5" y1="559" x2="325" y2="559" stroke="#4a8ae0"/><line x1="320.5" y1="561" x2="325" y2="561" stroke="#4a8ae0"/>
<text x="332.6" y="563.5" font-size="8.6" fill="#333" font-weight="bold" text-anchor="start" stroke="#333" stroke-width="0.25" >Chart</text>
<path d="M786.5,555.8 L783,560.2 L786.5,564.6 Z M796.7,555.8 L800.2,560.2 L796.7,564.6 Z" fill="none" stroke="#8d97a3" stroke-width=".8"/><rect x="807.5" y="556" width="7.5" height="8" fill="none" stroke="#8d97a3" stroke-width=".8"/><line x1="809" y1="559" x2="813.5" y2="559" stroke="#8d97a3" stroke-width=".8"/><line x1="809" y1="561" x2="813.5" y2="561" stroke="#8d97a3" stroke-width=".8"/>
<line x1="305.5" y1="105" x2="305.5" y2="569" stroke="#9ea6b0" stroke-width="1" />
<rect x="0" y="569" width="825" height="25" fill="url(#gStatus)" />
<text x="11.8" y="585.6" font-size="8.6" fill="#2e4a7a" font-weight="normal" text-anchor="start" >Chart</text>
<path d="M36.7,582.0999999999999 L41.3,582.0999999999999 L39,584.5999999999999 Z" fill="#2e4a7a"/>
<text x="245.8" y="585.8" font-size="8.6" fill="#2e4a7a" font-weight="normal" text-anchor="start" textLength="76.2" lengthAdjust="spacingAndGlyphs" >Track Changes: Off</text>
<rect x="325.8" y="574.3" width="120.3" height="17" fill="url(#gNav)" stroke="#cad5e2" stroke-width="1" rx="2"/>
<line x1="342.8" y1="575" x2="342.8" y2="591" stroke="#dde4ec" stroke-width="1" />
<line x1="360.3" y1="575" x2="360.3" y2="591" stroke="#dde4ec" stroke-width="1" />
<line x1="411.2" y1="575" x2="411.2" y2="591" stroke="#dde4ec" stroke-width="1" />
<line x1="429.6" y1="575" x2="429.6" y2="591" stroke="#dde4ec" stroke-width="1" />
<rect x="332.3" y="578.8" width="1.3" height="7" fill="#7ba7d8"/><path d="M337.2,578.8 L333.8,582.3 L337.2,585.8 Z" fill="#7ba7d8"/>
<path d="M353.5,578.8 L349,582.3 L353.5,585.8 Z" fill="#7ba7d8"/>
<text x="363.8" y="585.5" font-size="8.6" fill="#2e4a7a" font-weight="normal" text-anchor="start" textLength="43" lengthAdjust="spacingAndGlyphs" >Page 1 of 1</text>
<path d="M419,578.8 L423.3,582.3 L419,585.8 Z" fill="#7ba7d8"/>
<path d="M436,578.8 L439.5,582.3 L436,585.8 Z" fill="#7ba7d8"/><rect x="439.8" y="578.8" width="1.3" height="7" fill="#7ba7d8"/>
<rect x="449" y="574.2" width="34.6" height="17" fill="url(#gNav)" stroke="#cad5e2" stroke-width="1" rx="2"/>
<rect x="449.5" y="574.7" width="16.7" height="16" fill="#c3e1f7" />
<g stroke="#4a86d0" stroke-width="1"><line x1="454" y1="579" x2="463" y2="579"/><line x1="455.5" y1="581.5" x2="463" y2="581.5"/><line x1="455.5" y1="584" x2="463" y2="584"/><line x1="453" y1="586.5" x2="463" y2="586.5" stroke-dasharray="1,1"/></g>
<path d="M470.5,577.5 L479.5,577.5 L479.5,585.5 L477,588 L470.5,588 Z" fill="#e8f2fc" stroke="#4a86d0"/><line x1="472.5" y1="580.5" x2="477.5" y2="580.5" stroke="#4a86d0"/><line x1="472.5" y1="583" x2="477.5" y2="583" stroke="#4a86d0"/>
<line x1="485.8" y1="575" x2="485.8" y2="591" stroke="#d4dbe4" stroke-width="1" />
<text x="489.5" y="585.7" font-size="8.6" fill="#2e4a7a" font-weight="normal" text-anchor="start" >100%</text>
<path d="M516.2,582.0999999999999 L520.8,582.0999999999999 L518.5,584.5999999999999 Z" fill="#2e4a7a"/>
<circle cx="534" cy="582" r="3.3" fill="#eef2f6" stroke="#9aa3ad" stroke-width="1"/><line x1="536.5" y1="584.5" x2="540.5" y2="588" stroke="#8a939d" stroke-width="1.6"/><line x1="532.3" y1="582" x2="535.7" y2="582" stroke="#8a939d" stroke-width=".8"/>
<rect x="553" y="578.8" width="62.8" height="4.7" fill="#f4f6f9" stroke="#b7c1cc" stroke-width="1" rx="2"/>
<path d="M580.5,577 L587.5,577 L587.5,585.5 L584,588.3 L580.5,585.5 Z" fill="#f2f4f7" stroke="#9aa4b0" stroke-width=".8"/>
<circle cx="631.5" cy="582" r="3.3" fill="#eef2f6" stroke="#9aa3ad" stroke-width="1"/><line x1="634" y1="584.5" x2="638" y2="588" stroke="#8a939d" stroke-width="1.6"/><line x1="629.8" y1="582" x2="633.2" y2="582" stroke="#8a939d" stroke-width=".8"/><line x1="631.5" y1="580.3" x2="631.5" y2="583.7" stroke="#8a939d" stroke-width=".8"/>
<line x1="646.2" y1="575" x2="646.2" y2="591" stroke="#d4dbe4" stroke-width="1" />
<path d="M653.5,582 A4.5,4.5 0 0 1 661.5,580" fill="none" stroke="#3a85d8" stroke-width="1.8"/><path d="M661.5,583.5 A4.5,4.5 0 0 1 653.5,585.5" fill="none" stroke="#6fb4ef" stroke-width="1.8"/><path d="M660,577.5 L663,580.8 L658.8,581 Z" fill="#3a85d8"/><path d="M655,588 L652,584.7 L656.2,584.5 Z" fill="#6fb4ef"/>
<text x="667" y="586.4" font-size="8.6" fill="#2e4a7a" font-weight="normal" text-anchor="start" >5 minutes ago.</text>
<line x1="729.6" y1="575" x2="729.6" y2="591" stroke="#d4dbe4" stroke-width="1" />
<path d="M740.5,578 L746.5,576.5 L746.5,585 L740.5,587 Z" fill="#4d86d6" stroke="#2f5fa8" stroke-width=".7"/><path d="M738,579 L740.5,578 L740.5,587 L738,588 Z" fill="#8ab8ee" stroke="#2f5fa8" stroke-width=".6"/><path d="M737.5,583 L742,588 M742,583 L737.5,588" stroke="#e0201a" stroke-width="1.3"/>
<text x="748.6" y="586.4" font-size="8.6" fill="#333" font-weight="normal" text-anchor="start" textLength="53.9" lengthAdjust="spacingAndGlyphs" >Disconnected</text>
<rect x="349.9" y="179" width="417.4" height="277.4" fill="none" stroke="#a3b3ce" stroke-width="1.2"/>
<circle cx="349.9" cy="179" r="2.6" fill="#e4f2fb" stroke="#8fa3c2" stroke-width="1"/>
<circle cx="767.3" cy="179" r="2.6" fill="#e4f2fb" stroke="#8fa3c2" stroke-width="1"/>
<circle cx="349.9" cy="456.4" r="2.6" fill="#e4f2fb" stroke="#8fa3c2" stroke-width="1"/>
<circle cx="767.3" cy="456.4" r="2.6" fill="#e4f2fb" stroke="#8fa3c2" stroke-width="1"/>
<rect x="556.1" y="176.5" width="5" height="5" fill="#e4f2fb" stroke="#8fa3c2" stroke-width="1"/>
<rect x="556.1" y="453.9" width="5" height="5" fill="#e4f2fb" stroke="#8fa3c2" stroke-width="1"/>
<rect x="347.4" y="315.0" width="5" height="5" fill="#e4f2fb" stroke="#8fa3c2" stroke-width="1"/>
<rect x="764.8" y="315.0" width="5" height="5" fill="#e4f2fb" stroke="#8fa3c2" stroke-width="1"/>
<line x1="393.9" y1="376.41999999999996" x2="703" y2="376.41999999999996" stroke="#e6e6e6" stroke-width="1" />
<line x1="393.9" y1="329.44" x2="703" y2="329.44" stroke="#e6e6e6" stroke-width="1" />
<line x1="393.9" y1="282.46" x2="703" y2="282.46" stroke="#e6e6e6" stroke-width="1" />
<line x1="393.9" y1="235.48" x2="703" y2="235.48" stroke="#e6e6e6" stroke-width="1" />
<line x1="393.9" y1="188.5" x2="703" y2="188.5" stroke="#e6e6e6" stroke-width="1" />
<line x1="389.1" y1="423.4" x2="392.9" y2="423.4" stroke="#8a8a8a" stroke-width="1" />
<text x="384.4" y="426.9" font-size="9.3" fill="#707070" font-weight="bold" text-anchor="end" stroke="#707070" stroke-width="0.25" textLength="4.8" lengthAdjust="spacingAndGlyphs">0</text>
<line x1="389.1" y1="376.41999999999996" x2="392.9" y2="376.41999999999996" stroke="#8a8a8a" stroke-width="1" />
<text x="384.4" y="379.91999999999996" font-size="9.3" fill="#707070" font-weight="bold" text-anchor="end" stroke="#707070" stroke-width="0.25" textLength="14.5" lengthAdjust="spacingAndGlyphs">100</text>
<line x1="389.1" y1="329.44" x2="392.9" y2="329.44" stroke="#8a8a8a" stroke-width="1" />
<text x="384.4" y="332.94" font-size="9.3" fill="#707070" font-weight="bold" text-anchor="end" stroke="#707070" stroke-width="0.25" textLength="14.5" lengthAdjust="spacingAndGlyphs">200</text>
<line x1="389.1" y1="282.46" x2="392.9" y2="282.46" stroke="#8a8a8a" stroke-width="1" />
<text x="384.4" y="285.96" font-size="9.3" fill="#707070" font-weight="bold" text-anchor="end" stroke="#707070" stroke-width="0.25" textLength="14.5" lengthAdjust="spacingAndGlyphs">300</text>
<line x1="389.1" y1="235.48" x2="392.9" y2="235.48" stroke="#8a8a8a" stroke-width="1" />
<text x="384.4" y="238.98" font-size="9.3" fill="#707070" font-weight="bold" text-anchor="end" stroke="#707070" stroke-width="0.25" textLength="14.5" lengthAdjust="spacingAndGlyphs">400</text>
<line x1="389.1" y1="188.5" x2="392.9" y2="188.5" stroke="#8a8a8a" stroke-width="1" />
<text x="384.4" y="192.0" font-size="9.3" fill="#707070" font-weight="bold" text-anchor="end" stroke="#707070" stroke-width="0.25" textLength="14.5" lengthAdjust="spacingAndGlyphs">500</text>
<line x1="393.3" y1="423.4" x2="702.7" y2="423.4" stroke="#8c8c8c" stroke-width="1.3" />
<line x1="393.9" y1="423.4" x2="393.9" y2="427.3" stroke="#8c8c8c" stroke-width="1" />
<text x="393.29999999999995" y="436.8" font-size="9.3" fill="#707070" font-weight="bold" text-anchor="middle" stroke="#707070" stroke-width="0.25" textLength="4.8" lengthAdjust="spacingAndGlyphs">0</text>
<line x1="437.94" y1="423.4" x2="437.94" y2="427.3" stroke="#8c8c8c" stroke-width="1" />
<text x="437.34" y="436.8" font-size="9.3" fill="#707070" font-weight="bold" text-anchor="middle" stroke="#707070" stroke-width="0.25" textLength="9.8" lengthAdjust="spacingAndGlyphs">10</text>
<line x1="481.97999999999996" y1="423.4" x2="481.97999999999996" y2="427.3" stroke="#8c8c8c" stroke-width="1" />
<text x="481.37999999999994" y="436.8" font-size="9.3" fill="#707070" font-weight="bold" text-anchor="middle" stroke="#707070" stroke-width="0.25" textLength="9.8" lengthAdjust="spacingAndGlyphs">20</text>
<line x1="526.02" y1="423.4" x2="526.02" y2="427.3" stroke="#8c8c8c" stroke-width="1" />
<text x="525.42" y="436.8" font-size="9.3" fill="#707070" font-weight="bold" text-anchor="middle" stroke="#707070" stroke-width="0.25" textLength="9.8" lengthAdjust="spacingAndGlyphs">30</text>
<line x1="570.06" y1="423.4" x2="570.06" y2="427.3" stroke="#8c8c8c" stroke-width="1" />
<text x="569.4599999999999" y="436.8" font-size="9.3" fill="#707070" font-weight="bold" text-anchor="middle" stroke="#707070" stroke-width="0.25" textLength="9.8" lengthAdjust="spacingAndGlyphs">40</text>
<line x1="614.0999999999999" y1="423.4" x2="614.0999999999999" y2="427.3" stroke="#8c8c8c" stroke-width="1" />
<text x="613.4999999999999" y="436.8" font-size="9.3" fill="#707070" font-weight="bold" text-anchor="middle" stroke="#707070" stroke-width="0.25" textLength="9.8" lengthAdjust="spacingAndGlyphs">50</text>
<line x1="658.14" y1="423.4" x2="658.14" y2="427.3" stroke="#8c8c8c" stroke-width="1" />
<text x="657.54" y="436.8" font-size="9.3" fill="#707070" font-weight="bold" text-anchor="middle" stroke="#707070" stroke-width="0.25" textLength="9.8" lengthAdjust="spacingAndGlyphs">60</text>
<line x1="702.18" y1="423.4" x2="702.18" y2="427.3" stroke="#8c8c8c" stroke-width="1" />
<text x="701.5799999999999" y="436.8" font-size="9.3" fill="#707070" font-weight="bold" text-anchor="middle" stroke="#707070" stroke-width="0.25" textLength="9.8" lengthAdjust="spacingAndGlyphs">70</text>
<text x="726.7" y="436.4" font-size="8.4" fill="#555" font-weight="bold" text-anchor="middle" stroke="#555" stroke-width="0.25" >...</text>
<text x="548" y="451.5" font-size="8.8" fill="#222" font-weight="bold" text-anchor="middle" stroke="#222" stroke-width="0.25" >Gin Sales</text>
<text x="0" y="0" font-size="9.4" font-weight="bold" fill="#222" stroke="#222" stroke-width=".25" text-anchor="middle" textLength="51" lengthAdjust="spacingAndGlyphs" transform="translate(361.9,306.7) rotate(-90)">Tonic Sales</text>
<text x="724.7" y="206.5" font-size="8.8" fill="#111" font-weight="bold" text-anchor="start" stroke="#111" stroke-width="0.25" textLength="25" lengthAdjust="spacingAndGlyphs" >Week</text>
<circle cx="730.3" cy="219.90" r="3.5" fill="#3d8fe0"/>
<text x="739.4" y="223.1" font-size="9.3" fill="#707070" font-weight="bold" text-anchor="start" stroke="#707070" stroke-width="0.25" textLength="12.7" lengthAdjust="spacingAndGlyphs">1.0</text>
<circle cx="730.3" cy="235.18" r="3.5" fill="#a6d23a"/>
<text x="739.4" y="238.38" font-size="9.3" fill="#707070" font-weight="bold" text-anchor="start" stroke="#707070" stroke-width="0.25" textLength="12.7" lengthAdjust="spacingAndGlyphs">2.0</text>
<circle cx="730.3" cy="250.46" r="3.5" fill="#f5a53c"/>
<text x="739.4" y="253.66" font-size="9.3" fill="#707070" font-weight="bold" text-anchor="start" stroke="#707070" stroke-width="0.25" textLength="12.7" lengthAdjust="spacingAndGlyphs">3.0</text>
<circle cx="730.3" cy="265.74" r="3.5" fill="#b4d6f2"/>
<text x="739.4" y="268.94" font-size="9.3" fill="#707070" font-weight="bold" text-anchor="start" stroke="#707070" stroke-width="0.25" textLength="12.7" lengthAdjust="spacingAndGlyphs">4.0</text>
<circle cx="730.3" cy="281.02" r="3.5" fill="#5aac3e"/>
<text x="739.4" y="284.21999999999997" font-size="9.3" fill="#707070" font-weight="bold" text-anchor="start" stroke="#707070" stroke-width="0.25" textLength="12.7" lengthAdjust="spacingAndGlyphs">5.0</text>
<circle cx="730.3" cy="296.30" r="3.5" fill="#f6d55a"/>
<text x="739.4" y="299.5" font-size="9.3" fill="#707070" font-weight="bold" text-anchor="start" stroke="#707070" stroke-width="0.25" textLength="12.7" lengthAdjust="spacingAndGlyphs">6.0</text>
<circle cx="730.3" cy="311.58" r="3.5" fill="#d9694f"/>
<text x="739.4" y="314.78" font-size="9.3" fill="#707070" font-weight="bold" text-anchor="start" stroke="#707070" stroke-width="0.25" textLength="12.7" lengthAdjust="spacingAndGlyphs">7.0</text>
<circle cx="730.3" cy="326.86" r="3.5" fill="#d2d2d2"/>
<text x="739.4" y="330.06" font-size="9.3" fill="#707070" font-weight="bold" text-anchor="start" stroke="#707070" stroke-width="0.25" textLength="12.7" lengthAdjust="spacingAndGlyphs">8.0</text>
<circle cx="730.3" cy="342.14" r="3.5" fill="#3b99b2"/>
<text x="739.4" y="345.34" font-size="9.3" fill="#707070" font-weight="bold" text-anchor="start" stroke="#707070" stroke-width="0.25" textLength="12.7" lengthAdjust="spacingAndGlyphs">9.0</text>
<circle cx="730.3" cy="357.42" r="3.5" fill="#d9df55"/>
<text x="739.4" y="360.61999999999995" font-size="9.3" fill="#707070" font-weight="bold" text-anchor="start" stroke="#707070" stroke-width="0.25" textLength="17" lengthAdjust="spacingAndGlyphs">10.0</text>
<circle cx="730.3" cy="372.70" r="3.5" fill="#4b8a55"/>
<text x="739.4" y="375.9" font-size="9.3" fill="#707070" font-weight="bold" text-anchor="start" stroke="#707070" stroke-width="0.25" textLength="17" lengthAdjust="spacingAndGlyphs">11.0</text>
<circle cx="730.3" cy="387.98" r="3.5" fill="#8ee0e6"/>
<text x="739.4" y="391.18" font-size="9.3" fill="#707070" font-weight="bold" text-anchor="start" stroke="#707070" stroke-width="0.25" textLength="17" lengthAdjust="spacingAndGlyphs">12.0</text>
<circle cx="730.3" cy="403.26" r="3.5" fill="#ef8c2c"/>
<text x="739.4" y="406.46" font-size="9.3" fill="#707070" font-weight="bold" text-anchor="start" stroke="#707070" stroke-width="0.25" textLength="17" lengthAdjust="spacingAndGlyphs">13.0</text>
<circle cx="730.3" cy="418.54" r="3.5" fill="#c7ced8"/>
<text x="739.4" y="421.73999999999995" font-size="9.3" fill="#707070" font-weight="bold" text-anchor="start" stroke="#707070" stroke-width="0.25" textLength="17" lengthAdjust="spacingAndGlyphs">14.0</text>
<circle cx="548.2" cy="332" r="2.55" fill="#3f7f4f" stroke="#356b43" stroke-width=".5"/>
<circle cx="548.2" cy="329.5" r="2.55" fill="#3f7f4f" stroke="#356b43" stroke-width=".5"/>
<circle cx="544.2" cy="324.4" r="2.55" fill="#5aac3e" stroke="#4c9234" stroke-width=".5"/>
<circle cx="553.1" cy="327.7" r="2.55" fill="#d9694f" stroke="#b85943" stroke-width=".5"/>
<circle cx="557.1" cy="326" r="2.55" fill="#d9694f" stroke="#b85943" stroke-width=".5"/>
<circle cx="561.9" cy="318.2" r="2.55" fill="#8ee0e6" stroke="#78bec3" stroke-width=".5"/>
<circle cx="561.9" cy="309.8" r="2.55" fill="#f6d55a" stroke="#d1b54c" stroke-width=".5"/>
<circle cx="565.9" cy="314.1" r="2.55" fill="#a6d23a" stroke="#8db231" stroke-width=".5"/>
<circle cx="569.7" cy="304.2" r="2.55" fill="#cfd2d6" stroke="#afb2b5" stroke-width=".5"/>
<circle cx="574.8" cy="306.1" r="2.55" fill="#d9694f" stroke="#b85943" stroke-width=".5"/>
<circle cx="574.8" cy="314.8" r="2.55" fill="#8fc4ec" stroke="#79a6c8" stroke-width=".5"/>
<circle cx="579" cy="295.7" r="2.55" fill="#8cc870" stroke="#77aa5f" stroke-width=".5"/>
<circle cx="579.5" cy="303.6" r="2.55" fill="#8ee0e6" stroke="#78bec3" stroke-width=".5"/>
<circle cx="587.6" cy="305.3" r="2.55" fill="#b474ac" stroke="#996292" stroke-width=".5"/>
<circle cx="587.6" cy="293.6" r="2.55" fill="#c5ccd6" stroke="#a7adb5" stroke-width=".5"/>
<circle cx="592.6" cy="289.8" r="2.55" fill="#8fc4ec" stroke="#79a6c8" stroke-width=".5"/>
<circle cx="596.7" cy="292.4" r="2.55" fill="#f5a53c" stroke="#d08c33" stroke-width=".5"/>
<circle cx="592.6" cy="295.5" r="2.55" fill="#3f7f4f" stroke="#356b43" stroke-width=".5"/>
<circle cx="592.1" cy="301" r="2.55" fill="#3b99b2" stroke="#328297" stroke-width=".5"/>
<circle cx="596.7" cy="301.3" r="2.55" fill="#a6d23a" stroke="#8db231" stroke-width=".5"/>
<circle cx="596.7" cy="285.4" r="2.55" fill="#3d8fe0" stroke="#3379be" stroke-width=".5"/>
<circle cx="601.2" cy="288.9" r="2.55" fill="#c5ccd6" stroke="#a7adb5" stroke-width=".5"/>
<circle cx="605.7" cy="292.7" r="2.55" fill="#cfd2d6" stroke="#afb2b5" stroke-width=".5"/>
<circle cx="605.7" cy="288.8" r="2.55" fill="#f5a53c" stroke="#d08c33" stroke-width=".5"/>
<circle cx="605.5" cy="297.2" r="2.55" fill="#d9694f" stroke="#b85943" stroke-width=".5"/>
<circle cx="609.3" cy="278.7" r="2.55" fill="#4aa8c2" stroke="#3e8ea4" stroke-width=".5"/>
<circle cx="614.3" cy="277.5" r="2.55" fill="#cfd2d6" stroke="#afb2b5" stroke-width=".5"/>
<circle cx="614.1" cy="283.8" r="2.55" fill="#3a72c2" stroke="#3160a4" stroke-width=".5"/>
<circle cx="614.1" cy="273.8" r="2.55" fill="#5aac3e" stroke="#4c9234" stroke-width=".5"/>
<circle cx="618.4" cy="272.8" r="2.55" fill="#74c890" stroke="#62aa7a" stroke-width=".5"/>
<circle cx="618.4" cy="281.1" r="2.55" fill="#d3dc55" stroke="#b3bb48" stroke-width=".5"/>
<circle cx="623.4" cy="272.8" r="2.55" fill="#f5a53c" stroke="#d08c33" stroke-width=".5"/>
<circle cx="623.4" cy="276.4" r="2.55" fill="#d9694f" stroke="#b85943" stroke-width=".5"/>
<circle cx="632.1" cy="278.9" r="2.55" fill="#b8d8f4" stroke="#9cb7cf" stroke-width=".5"/>
<circle cx="632" cy="275.3" r="2.55" fill="#4aa8c2" stroke="#3e8ea4" stroke-width=".5"/>
<circle cx="636.5" cy="271" r="2.55" fill="#8c62b6" stroke="#77539a" stroke-width=".5"/>
<circle cx="632" cy="269.6" r="2.55" fill="#3b99b2" stroke="#328297" stroke-width=".5"/>
<circle cx="636.1" cy="264.9" r="2.55" fill="#b474ac" stroke="#996292" stroke-width=".5"/>
<circle cx="636.1" cy="267.1" r="2.55" fill="#ea8a2c" stroke="#c67525" stroke-width=".5"/>
<circle cx="632" cy="264.8" r="2.55" fill="#3d8fe0" stroke="#3379be" stroke-width=".5"/>
<circle cx="636.1" cy="260.9" r="2.55" fill="#74c890" stroke="#62aa7a" stroke-width=".5"/>
<circle cx="644.8" cy="261.8" r="2.55" fill="#cfd2d6" stroke="#afb2b5" stroke-width=".5"/>
<circle cx="649.9" cy="256.5" r="2.55" fill="#f5a53c" stroke="#d08c33" stroke-width=".5"/>
<circle cx="653.7" cy="258.4" r="2.55" fill="#d3dc55" stroke="#b3bb48" stroke-width=".5"/>
<circle cx="653.7" cy="262.8" r="2.55" fill="#3a72c2" stroke="#3160a4" stroke-width=".5"/>
<circle cx="649.9" cy="269.1" r="2.55" fill="#3f7f4f" stroke="#356b43" stroke-width=".5"/>
<circle cx="657.9" cy="252.3" r="2.55" fill="#3f7f4f" stroke="#356b43" stroke-width=".5"/>
<circle cx="657.9" cy="246.4" r="2.55" fill="#b8d8f4" stroke="#9cb7cf" stroke-width=".5"/>
<g fill="#d9ebf9" stroke="none"><path d="M774.2,493 L779.5,487.1 L784.8,493 Z"/><path d="M774.2,523 L779.5,529 L784.8,523 Z"/><path d="M765.7,502.4 L760,507.5 L765.7,512.5 Z"/><path d="M794.2,502.4 L800.1,507.5 L794.2,512.5 Z"/></g><path d="M773.3,499.3 L784,499.3 L786.5,501.8 L786.5,515.5 L773.3,515.5 Z" fill="#fafcfe" stroke="#e2eaf2" stroke-width="1"/><text x="779.8" y="511" font-size="8" fill="#dfe6ee" text-anchor="middle">1</text></svg>

</body></html>
